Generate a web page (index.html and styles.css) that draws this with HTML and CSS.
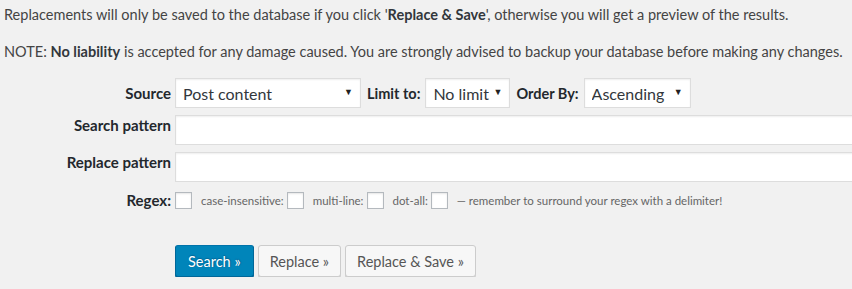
FILE: index.html
```html
<!DOCTYPE html>
<html lang="en">
<head>
    <meta charset="UTF-8">
    <title>Search Regex</title>
    <link rel="stylesheet" href="styles.css">
</head>
<body>
    <div class="wrap">
        <p>Replacements will only be saved to the database if you click '<strong>Replace &amp; Save</strong>', otherwise you will get a preview of the results.</p>
        <p>NOTE: <strong>No liability</strong> is accepted for any damage caused. You are strongly advised to backup your database before making any changes.</p>

        <form class="search-form">
            <div class="row row-source">
                <label class="row-label">Source</label>
                <div class="row-field">
                    <span class="select-wrap"><select class="select select-source"><option>Post content</option></select></span>
                    <label class="inline-label">Limit to:</label>
                    <span class="select-wrap"><select class="select select-limit"><option>No limit</option></select></span>
                    <label class="inline-label">Order By:</label>
                    <span class="select-wrap"><select class="select select-order"><option>Ascending</option></select></span>
                </div>
            </div>
            <div class="row row-pattern">
                <label class="row-label">Search pattern</label>
                <div class="row-field"><input type="text" class="text-field"></div>
            </div>
            <div class="row row-pattern">
                <label class="row-label">Replace pattern</label>
                <div class="row-field"><input type="text" class="text-field"></div>
            </div>
            <div class="row row-regex">
                <label class="row-label">Regex:</label>
                <div class="row-field">
                    <input type="checkbox" class="check">
                    <span class="small">case-insensitive:</span>
                    <input type="checkbox" class="check">
                    <span class="small">multi-line:</span>
                    <input type="checkbox" class="check">
                    <span class="small">dot-all:</span>
                    <input type="checkbox" class="check">
                    <span class="small">&mdash; remember to surround your regex with a delimiter!</span>
                </div>
            </div>
            <div class="buttons">
                <button type="button" class="button button-primary">Search &raquo;</button>
                <button type="button" class="button">Replace &raquo;</button>
                <button type="button" class="button">Replace &amp; Save &raquo;</button>
            </div>
        </form>
    </div>
</body>
</html>
```

FILE: styles.css
```css
/* Estilos gerais */
body {
    margin: 0;
    background-color: #f1f1f1;
    color: #444;
    font-family: 'Lato', 'Open Sans', sans-serif;
    font-size: 14.5px;
    overflow: hidden;
}
.wrap {
    padding: 4px 0 0 4px;
}
p {
    margin: 0 0 16px;
    line-height: 21px;
}
strong {
    color: #32373c;
}

/* Formulário */
.search-form {
    margin-top: 15px;
}
.row {
    display: grid;
    grid-template-columns: 167px 1fr;
    column-gap: 4px;
    margin-bottom: 7px;
}
.row-label {
    text-align: right;
    font-weight: bold;
    font-size: 15px;
    color: #23282d;
    line-height: 20px;
}
.row-source {
    align-items: center;
}
.row-field {
    display: flex;
    align-items: center;
}
.inline-label {
    font-weight: bold;
    font-size: 14.5px;
    color: #23282d;
    margin: 0 5px 0 6px;
    line-height: 21px;
}

.select-wrap {
    position: relative;
    display: inline-block;
}
.select-wrap::after {
    content: "\25BC";
    position: absolute;
    right: 8px;
    top: 8px;
    font-size: 9px;
    color: #222;
    pointer-events: none;
}
.select {
    -webkit-appearance: none;
    appearance: none;
    height: 30px;
    border: 1px solid #ddd;
    background-color: #fff;
    box-shadow: inset 0 1px 2px rgba(0, 0, 0, 0.07);
    color: #32373c;
    font-family: inherit;
    font-size: 16px;
    padding: 0 7px;
    border-radius: 0;
}
.select-source { width: 186px; }
.select-limit { width: 85px; }
.select-order { width: 107px; }

.text-field {
    width: 900px;
    height: 30px;
    box-sizing: border-box;
    border: 1px solid #ddd;
    background-color: #fff;
    box-shadow: inset 0 1px 2px rgba(0, 0, 0, 0.07);
    margin: 0;
}

.row-regex {
    margin-top: 8px;
    align-items: center;
}
.check {
    -webkit-appearance: none;
    appearance: none;
    width: 17px;
    height: 17px;
    margin: 0 9px 0 0;
    border: 1px solid #b4b9be;
    background-color: #fff;
    box-shadow: inset 0 1px 2px rgba(0, 0, 0, 0.1);
}
.small {
    font-size: 11.5px;
    color: #666;
    margin-right: 3px;
}

/* Botões */
.buttons {
    display: flex;
    gap: 4px;
    margin: 35px 0 0 171px;
}
.button {
    height: 32px;
    padding: 0 11px;
    border: 1px solid #ccc;
    border-radius: 3px;
    background-color: #f7f7f7;
    box-shadow: 0 1px 0 #ccc;
    color: #555;
    font-family: inherit;
    font-size: 14.5px;
    cursor: pointer;
}
.button-primary {
    padding: 0 12px;
    background-color: #0085ba;
    border-color: #0073aa #006799 #006799;
    box-shadow: 0 1px 0 #006799;
    color: #fff;
    text-shadow: 0 -1px 1px #006799, 1px 0 1px #006799;
}
```
